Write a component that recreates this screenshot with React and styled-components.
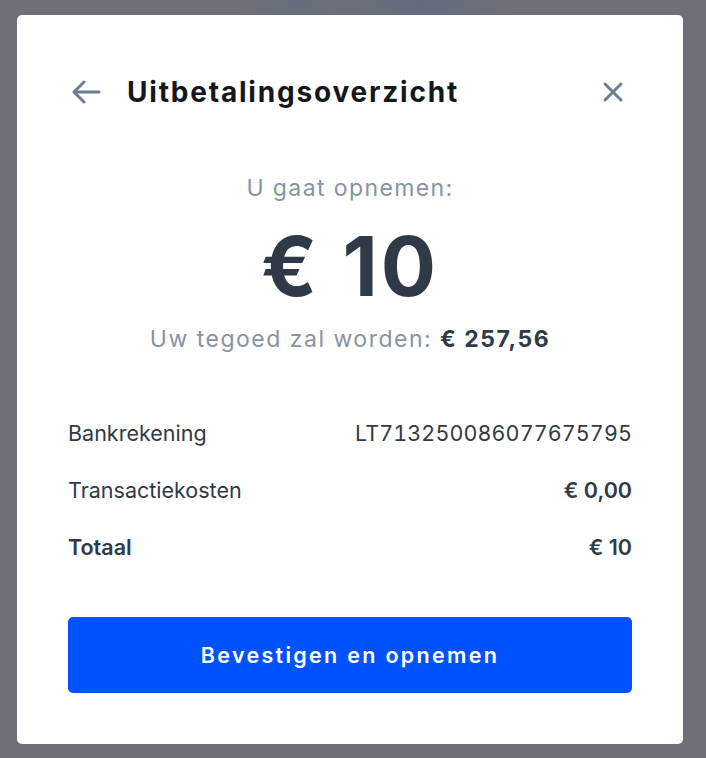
import React from 'react';
import styled, { createGlobalStyle } from 'styled-components';

const GlobalStyle = createGlobalStyle`
  html, body {
    margin: 0;
    padding: 0;
    height: 100%;
  }
  body {
    background: #6e7077;
    font-family: Inter, "Noto Sans", sans-serif;
    -webkit-font-smoothing: antialiased;
  }
`;

const Backdrop = styled.div`
  min-height: 758px;
  padding: 15px 23px 14px 17px;
  box-sizing: border-box;
  background:
    radial-gradient(ellipse 90px 30px at 420px 10px, rgba(80, 100, 150, 0.35), transparent),
    radial-gradient(ellipse 60px 20px at 300px 6px, rgba(80, 100, 150, 0.25), transparent),
    #6e7077;
`;

const Modal = styled.div`
  width: 666px;
  height: 729px;
  box-sizing: border-box;
  background: #fff;
  border-radius: 5px;
  padding: 55px 51px 0 51px;
  display: flex;
  flex-direction: column;
`;

const Header = styled.div`
  display: flex;
  align-items: center;
  height: 44px;
  padding-left: 4px;
`;

const IconButton = styled.button`
  border: none;
  background: none;
  padding: 0;
  display: flex;
  align-items: center;
  justify-content: center;
  color: #6b7d91;
  cursor: pointer;
  margin-left: ${p => (p.$push ? 'auto' : '0')};
  margin-right: ${p => (p.$push ? '8px' : '0')};
`;

const Title = styled.h1`
  margin: 0 0 0 25px;
  font-size: 28px;
  font-weight: 700;
  color: #14171c;
  letter-spacing: 1.8px;
`;

const Summary = styled.div`
  display: flex;
  flex-direction: column;
  align-items: center;
  margin-top: 60px;
`;

const Label = styled.div`
  font-size: 23px;
  line-height: 28px;
  color: #8593a5;
  letter-spacing: 1.4px;
`;

const Amount = styled.div`
  font-size: 82px;
  line-height: 90px;
  font-weight: 700;
  color: #2f3a46;
  margin-top: 20px;
  letter-spacing: 3px;
`;

const Balance = styled.div`
  font-size: 23px;
  line-height: 30px;
  color: #8593a5;
  margin-top: 12px;
  letter-spacing: 1.5px;

  strong {
    font-weight: 700;
    color: #2f3a46;
  }
`;

const Details = styled.div`
  display: flex;
  flex-direction: column;
  gap: 31px;
  margin-top: 66px;
`;

const Row = styled.div`
  display: flex;
  justify-content: space-between;
  align-items: center;
  font-size: 21.5px;
  line-height: 26px;
  color: #2f3a46;
  font-weight: ${p => (p.$bold ? 600 : 400)};
`;

const Value = styled.span`
  font-weight: ${p => (p.$bold ? 600 : 400)};
  font-variant-numeric: ${p => (p.$mono ? 'tabular-nums' : 'normal')};
  letter-spacing: ${p => (p.$mono ? '0.1px' : '0')};
`;

const ConfirmButton = styled.button`
  margin-top: 57px;
  height: 76px;
  width: 100%;
  border: none;
  border-radius: 5px;
  background: #0052ff;
  color: #fff;
  font-family: Inter, "Noto Sans", sans-serif;
  font-size: 21.5px;
  font-weight: 600;
  letter-spacing: 2.3px;
  cursor: pointer;
`;

const BackIcon = () => (
  <svg width="30" height="24" viewBox="0 0 30 24" fill="none" stroke="currentColor"
    strokeWidth="3" strokeLinecap="round" strokeLinejoin="round">
    <path d="M27 12H2M12 2L2 12l10 10" />
  </svg>
);

const CloseIcon = () => (
  <svg width="22" height="22" viewBox="0 0 22 22" fill="none" stroke="currentColor"
    strokeWidth="3" strokeLinecap="round">
    <path d="M3 3l16 16M19 3L3 19" />
  </svg>
);

export default function App() {
  return (
    <>
      <GlobalStyle />
      <Backdrop>
        <Modal>
          <Header>
            <IconButton aria-label="Terug">
              <BackIcon />
            </IconButton>
            <Title>Uitbetalingsoverzicht</Title>
            <IconButton $push aria-label="Sluiten">
              <CloseIcon />
            </IconButton>
          </Header>

          <Summary>
            <Label>U gaat opnemen:</Label>
            <Amount>€ 10</Amount>
            <Balance>
              Uw tegoed zal worden: <strong>€ 257,56</strong>
            </Balance>
          </Summary>

          <Details>
            <Row>
              <span>Bankrekening</span>
              <Value $mono>LT713250086077675795</Value>
            </Row>
            <Row>
              <span>Transactiekosten</span>
              <Value $bold>€ 0,00</Value>
            </Row>
            <Row $bold>
              <span>Totaal</span>
              <Value $bold>€ 10</Value>
            </Row>
          </Details>

          <ConfirmButton>Bevestigen en opnemen</ConfirmButton>
        </Modal>
      </Backdrop>
    </>
  );
}
